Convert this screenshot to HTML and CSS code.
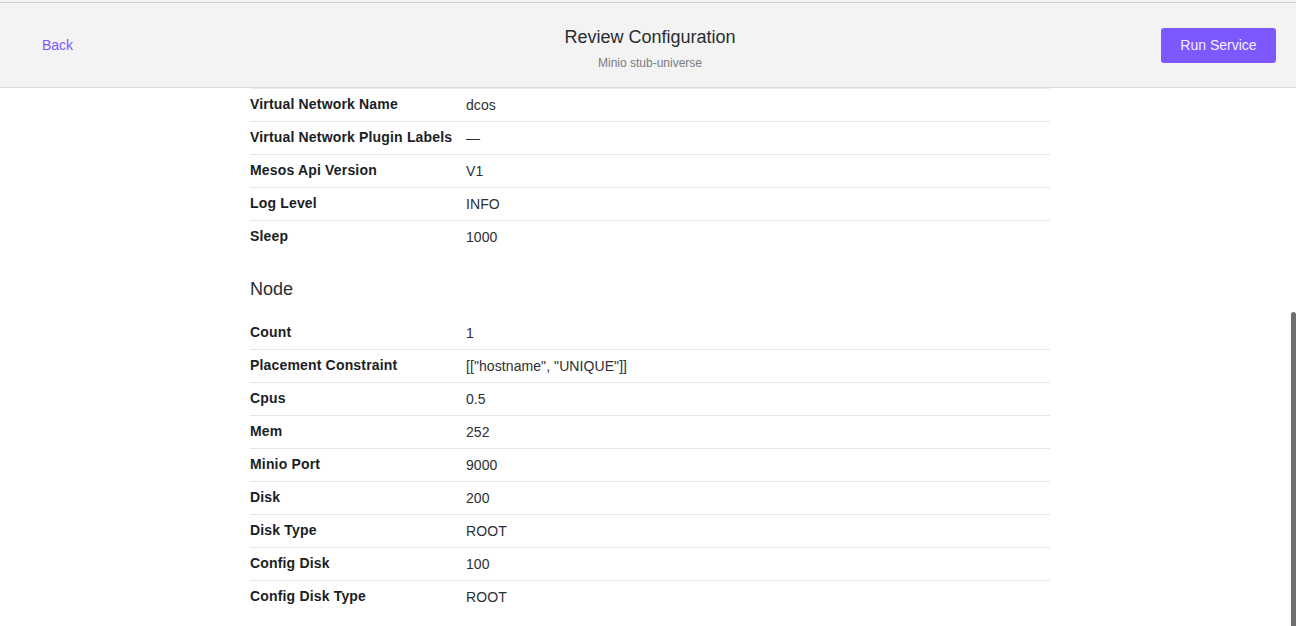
FILE: index.html
```html
<!DOCTYPE html>
<html>
<head>
<meta charset="utf-8">
<link rel="stylesheet" href="styles.css">
</head>
<body>
<div class="page">
  <header class="header">
    <div class="header-left"><a class="back" href="#">Back</a></div>
    <div class="header-center">
      <div class="title">Review Configuration</div>
      <div class="subtitle">Minio stub-universe</div>
    </div>
    <div class="header-right"><button class="run">Run Service</button></div>
  </header>
  <main class="content">
    <div class="section">
      <div class="row first"><div class="label">Virtual Network Name</div><div class="value">dcos</div></div>
      <div class="row"><div class="label">Virtual Network Plugin Labels</div><div class="value">—</div></div>
      <div class="row"><div class="label">Mesos Api Version</div><div class="value">V1</div></div>
      <div class="row"><div class="label">Log Level</div><div class="value">INFO</div></div>
      <div class="row last"><div class="label">Sleep</div><div class="value">1000</div></div>
    </div>
    <h2 class="section-title">Node</h2>
    <div class="section">
      <div class="row"><div class="label">Count</div><div class="value">1</div></div>
      <div class="row"><div class="label">Placement Constraint</div><div class="value">[["hostname", "UNIQUE"]]</div></div>
      <div class="row"><div class="label">Cpus</div><div class="value">0.5</div></div>
      <div class="row"><div class="label">Mem</div><div class="value">252</div></div>
      <div class="row"><div class="label">Minio Port</div><div class="value">9000</div></div>
      <div class="row"><div class="label">Disk</div><div class="value">200</div></div>
      <div class="row"><div class="label">Disk Type</div><div class="value">ROOT</div></div>
      <div class="row"><div class="label">Config Disk</div><div class="value">100</div></div>
      <div class="row last"><div class="label">Config Disk Type</div><div class="value">ROOT</div></div>
    </div>
  </main>
  <div class="scrollbar"></div>
</div>
</body>
</html>
```
FILE: styles.css
```css
html, body {
  margin: 0;
  padding: 0;
  background: #ffffff;
  font-family: "Liberation Sans", Arial, sans-serif;
  overflow: hidden;
}
.page {
  position: relative;
  height: 626px;
  overflow: hidden;
  padding-top: 2px;
  background: #ffffff;
}
.page::before {
  content: "";
  position: absolute;
  top: 0;
  left: 0;
  right: 0;
  height: 2px;
  background: #f3f3f3;
}
.header {
  display: grid;
  grid-template-columns: 1fr auto 1fr;
  align-items: center;
  height: 84px;
  background: #f3f3f3;
  border-top: 1px solid #cfcfcf;
  border-bottom: 1px solid #dadada;
  padding: 0 20px 0 20px;
}
.header-left {
  display: flex;
  align-items: center;
}
.back {
  color: #7d58ff;
  text-decoration: none;
  font-size: 14px;
  padding: 0 22px;
  line-height: 20px;
}
.header-center {
  align-self: start;
  display: flex;
  flex-direction: column;
  align-items: center;
  padding-left: 4px;
  padding-top: 23px;
}
.title {
  font-size: 18px;
  color: #2a2c30;
  line-height: 22px;
}
.subtitle {
  font-size: 12px;
  color: #7a7c80;
  line-height: 16px;
  margin-top: 7px;
}
.header-right {
  display: flex;
  justify-content: flex-end;
}
.run {
  background: #7d58ff;
  color: #f4f0ff;
  border: none;
  border-radius: 3px;
  font-family: "Liberation Sans", Arial, sans-serif;
  font-size: 14px;
  height: 35px;
  width: 115px;
  padding: 0;
  cursor: pointer;
}
.content {
  width: 800px;
  margin: 0 auto;
  position: relative;
  left: 2px;
}
.row {
  display: flex;
  align-items: center;
  height: 32px;
  border-bottom: 1px solid #e6e6e6;
  font-size: 14px;
}
.row.first {
  border-top: 1px solid #ececec;
  height: 32px;
}
.row.last {
  border-bottom-color: transparent;
}
.label {
  width: 216px;
  flex: none;
  font-weight: bold;
  color: #1b1e24;
  letter-spacing: 0.17px;
  position: relative;
  top: -1px;
}
.value {
  color: #2c2f34;
  letter-spacing: 0.08px;
}
.section-title {
  font-weight: normal;
  font-size: 18px;
  color: #2a2c30;
  margin: 23px 0 16px 0;
  line-height: 24px;
}
.scrollbar {
  position: absolute;
  right: 0;
  top: 312px;
  bottom: 0;
  width: 5px;
  background: #6b6e73;
  border-radius: 3px 3px 0 0;
}
```
